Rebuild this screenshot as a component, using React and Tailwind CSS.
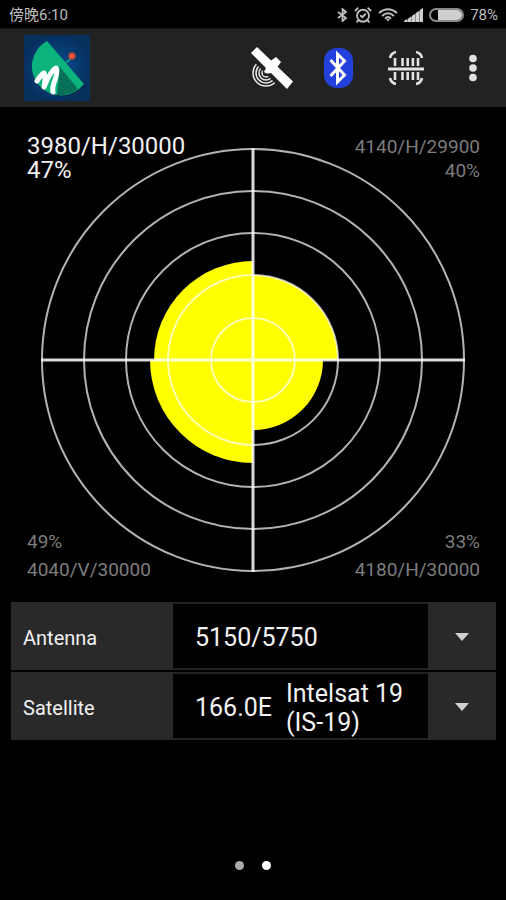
import React, { useState } from 'react';
import { AlarmClockCheck } from 'lucide-react';

const ANTENNAS = [
  { id: '5150/5750', freq: '5150/5750' },
  { id: '9750/10600', freq: '9750/10600' },
];

const SATELLITES = [
  { id: 'is19', position: '166.0E', name: 'Intelsat 19 (IS-19)' },
  { id: 'h3e', position: '169.0E', name: 'Horizons 3e' },
];

// radius of each ring on the dial, 20% apart
const RINGS = [42, 85, 127, 169, 211];

function StatusBar() {
  return (
    <div className="flex h-7 items-center justify-between pt-[2px] pl-[9px] pr-2 text-[15px] leading-5 text-[#bdbdbd]">
      <span>傍晚6:10</span>
      <div className="flex items-center gap-[6px]">
        <svg width="11" height="14" viewBox="0 0 11 14" fill="none" stroke="currentColor" strokeWidth="1.8">
          <path d="M1 4 L9 10 L5.5 13 V1 L9 4 L1 10" />
        </svg>
        <AlarmClockCheck size={18} strokeWidth={2.4} />
        <svg width="20" height="14" viewBox="0 0 20 14" fill="none" stroke="currentColor" strokeWidth="2">
          <path d="M1 5 Q10 -2.5 19 5" />
          <path d="M4 8 Q10 2.5 16 8" />
          <path d="M7 10.6 Q10 7.6 13 10.6" />
          <path d="M8 11 L10 13.6 L12 11 Z" fill="currentColor" stroke="none" />
        </svg>
        <svg width="19" height="14" viewBox="0 0 19 14">
          <path d="M0 14 L19 0 V14 Z" fill="#8c8c8c" />
          <path
            d="M0 14 V13 L3 11 V14 Z M4 14 V10.7 L7 8.5 V14 Z M8 14 V8 L11 6 V14 Z M12 14 V5 L15 3 V14 Z M16 14 V2 L19 0 V14 Z"
            fill="#cfcfcf"
          />
        </svg>
        <svg width="35" height="14" viewBox="0 0 35 14">
          <rect x="1" y="1" width="33" height="12" rx="6" fill="none" stroke="#8a8a8a" strokeWidth="2" />
          <path d="M9 2 H28 A5 5 0 0 1 28 12 H9 Z" fill="#cfcfcf" />
        </svg>
        <span>78%</span>
      </div>
    </div>
  );
}

function AppLogo() {
  return (
    <svg width="66" height="66" viewBox="0 0 66 66" role="img" aria-label="Satellite finder">
      <defs>
        <radialGradient id="logoBg">
          <stop offset="0" stopColor="#075092" />
          <stop offset="1" stopColor="#07305f" />
        </radialGradient>
      </defs>
      <rect width="66" height="66" fill="url(#logoBg)" />
      <path d="M22 8 A29 29 0 1 0 60 51 Z" fill="#04213c" />
      <path d="M23 6 A29 29 0 1 0 60 49 Z" fill="#0db37c" />
      <path d="M36 32 L54 54 Q45 61 33 60 Z" fill="#087058" />
      <path d="M42 28 L48 22" stroke="#0a8f86" strokeWidth="2" />
      <circle cx="48" cy="21" r="3.5" fill="#f2462e" />
      <circle cx="48" cy="21" r="1" fill="#ff9a80" />
      <path
        d="M13 46 Q18 38 20 38 Q22 42 20 52 Q27 35 32 33 Q34 36 31 45 Q28 52 29 57"
        fill="none"
        stroke="#fff"
        strokeWidth="5"
        strokeLinecap="round"
        strokeLinejoin="round"
      />
    </svg>
  );
}

function SatelliteIcon() {
  return (
    <svg width="44" height="44" viewBox="0 0 44 44">
      <defs>
        <clipPath id="waves">
          <path d="M0 12 L32 44 H0 Z" />
        </clipPath>
      </defs>
      <g clipPath="url(#waves)" fill="none" stroke="#e8e8e8" strokeWidth="1.5">
        <circle cx="16" cy="27" r="13" />
        <circle cx="16" cy="27" r="10" />
        <circle cx="16" cy="27" r="7" />
        <circle cx="16" cy="27" r="4" />
      </g>
      <path d="M14 26 L17 20 L23 26 Q17 29 14 26 Z" fill="#fff" />
      <path d="M19 16 L26 11 L31 16 L26 23 Z" fill="#fff" />
      <path d="M1 7 L7 1 L43 35.5 L37 43 Z" fill="#fff" />
    </svg>
  );
}

function BluetoothIcon() {
  return (
    <svg width="29" height="40" viewBox="0 0 29 40">
      <rect width="29" height="40" rx="13" fill="#2340da" />
      <path
        d="M6.5 12 L20.5 27 L13.5 34 V6 L20.5 13 L6.5 28"
        fill="none"
        stroke="#fff"
        strokeWidth="3"
      />
    </svg>
  );
}

function ScanIcon() {
  return (
    <svg width="36" height="36" viewBox="0 0 36 36" fill="none" stroke="#e3e3e3">
      <path
        d="M2 8 Q3 3 8 2 M28 2 Q33 3 34 8 M2 28 Q3 33 8 34 M28 34 Q33 33 34 28"
        strokeWidth="2.6"
      />
      <path
        d="M7 8 V16 M14.5 8 V16 M19.7 8 V16 M24.9 8 V16 M30 8 V16 M7 22 V30 M14.5 22 V30 M19.7 22 V30 M24.9 22 V30 M30 22 V30"
        strokeWidth="2.6"
      />
      <path d="M0 19 H36" strokeWidth="3.2" />
    </svg>
  );
}

function MoreIcon() {
  return (
    <svg width="8" height="28" viewBox="0 0 8 28" fill="#e0e0e0">
      <circle cx="4" cy="4.5" r="3.8" />
      <circle cx="4" cy="14" r="3.8" />
      <circle cx="4" cy="23.5" r="3.8" />
    </svg>
  );
}

function ToolbarButton({ label, children }) {
  return (
    <button type="button" aria-label={label} className="flex h-full w-[67px] items-center justify-center">
      {children}
    </button>
  );
}

function SignalDial() {
  return (
    <svg viewBox="0 0 426 426" className="block w-full">
      <g fill="#ffff00">
        <path d="M213 213 V114 A99 99 0 0 0 114 213 Z" />
        <path d="M213 213 V128 A85 85 0 0 1 298 213 Z" />
        <path d="M213 213 H110 A103 103 0 0 0 213 316 Z" />
        <path d="M213 213 H283 A70 70 0 0 1 213 283 Z" />
      </g>
      <g fill="none" stroke="#fff" strokeOpacity="0.7">
        {RINGS.map((r) => (
          <circle key={r} cx="213" cy="213" r={r} strokeWidth="2" />
        ))}
      </g>
      <path d="M1 213 H425 M213 1 V425" stroke="#fff" strokeOpacity="0.85" strokeWidth="3" />
    </svg>
  );
}

function Picker({ id, label, value, options, onChange, children }) {
  return (
    <div className="flex h-[68px] bg-[#2a292a]">
      <label htmlFor={id} className="flex w-[162px] items-center pt-1 pl-3 text-xl leading-6 text-[#f0f0f0]">
        {label}
      </label>
      <div className="relative flex flex-1">
        <div
          aria-hidden="true"
          className="flex flex-1 items-center gap-[14px] border-y-2 border-[#222] bg-black pt-[3px] pl-[22px] text-[25px] leading-[29px] text-[#f2f2f2]"
        >
          {children}
        </div>
        <div className="flex w-[68px] items-center justify-center pt-[2px]">
          <svg width="14" height="8" viewBox="0 0 14 8">
            <path d="M0 0 H14 L7 8 Z" fill="#d0d0d0" />
          </svg>
        </div>
        <select
          id={id}
          value={value}
          onChange={(e) => onChange(e.target.value)}
          className="absolute inset-0 h-full w-full cursor-pointer opacity-0"
        >
          {options.map((o) => (
            <option key={o.id} value={o.id}>
              {o.name ? `${o.position} ${o.name}` : o.freq}
            </option>
          ))}
        </select>
      </div>
    </div>
  );
}

export default function App() {
  const [antenna, setAntenna] = useState('5150/5750');
  const [satellite, setSatellite] = useState('is19');

  const sat = SATELLITES.find((s) => s.id === satellite);

  return (
    <div className="flex min-h-screen flex-col bg-black font-[Roboto,'Noto_Sans_CJK_SC',sans-serif]">
      <StatusBar />

      <header className="flex h-[79px] items-center justify-between border-t border-[#111] bg-[#222] pl-6">
        <AppLogo />
        <div className="flex h-full">
          <ToolbarButton label="Satellite"><SatelliteIcon /></ToolbarButton>
          <ToolbarButton label="Bluetooth"><BluetoothIcon /></ToolbarButton>
          <ToolbarButton label="Scan"><ScanIcon /></ToolbarButton>
          <ToolbarButton label="More options"><MoreIcon /></ToolbarButton>
        </div>
      </header>

      <main className="flex flex-1 flex-col">
        {/* Dial with one transponder per corner */}
        <section className="relative px-10 pt-10 pb-[29px] text-[19px] leading-6 text-[#7c7c7c]">
          <SignalDial />
          <div className="absolute top-[27px] left-[27px] text-2xl leading-6 text-[#f2f2f2]">
            <p>3980/H/30000</p>
            <p>47%</p>
          </div>
          <div className="absolute top-7 right-[26px] text-right">
            <p>4140/H/29900</p>
            <p>40%</p>
          </div>
          <div className="absolute bottom-[18px] left-[27px] leading-7">
            <p>49%</p>
            <p>4040/V/30000</p>
          </div>
          <div className="absolute right-[26px] bottom-[18px] text-right leading-7">
            <p>33%</p>
            <p>4180/H/30000</p>
          </div>
        </section>

        <form className="flex flex-col gap-[2px] pr-[10px] pl-[11px]">
          <Picker id="antenna" label="Antenna" value={antenna} options={ANTENNAS} onChange={setAntenna}>
            <span>{antenna}</span>
          </Picker>
          <Picker id="satellite" label="Satellite" value={satellite} options={SATELLITES} onChange={setSatellite}>
            <span>{sat.position}</span>
            <span className="flex-1">{sat.name}</span>
          </Picker>
        </form>

        {/* Page indicator */}
        <div className="mt-auto flex justify-center gap-[18px] pb-[30px]">
          <span className="size-[9px] rounded-full bg-[#aaa]" />
          <span className="size-[9px] rounded-full bg-white" />
        </div>
      </main>
    </div>
  );
}
